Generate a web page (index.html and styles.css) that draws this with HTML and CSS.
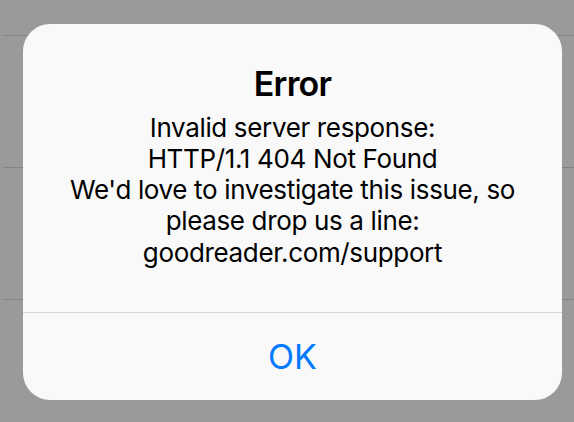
FILE: index.html
```html
<!DOCTYPE html>
<html lang="en">
<head>
<meta charset="utf-8">
<title>Error</title>
<link rel="stylesheet" href="styles.css">
</head>
<body>
<div class="list">
  <div class="row"></div>
  <div class="row"></div>
  <div class="row"></div>
</div>
<div class="alert" role="alertdialog">
  <div class="alert-content">
    <div class="alert-title">Error</div>
    <div class="alert-message">Invalid server response:<br>HTTP/1.1 404 Not Found<br>We'd love to investigate this issue, so<br>please drop us a line:<br>goodreader.com/support</div>
  </div>
  <div class="alert-actions">
    <button class="alert-button">OK</button>
  </div>
</div>
</body>
</html>
```
FILE: styles.css
```css
html, body {
  margin: 0;
  padding: 0;
  width: 574px;
  height: 422px;
  overflow: hidden;
  background: #9a9a9a;
  font-family: Inter, "Noto Sans", sans-serif;
}

.list {
  padding-top: 35px;
  padding-left: 3px;
}

.row {
  height: 131px;
  border-top: 1px solid #828282;
}

.alert {
  position: absolute;
  left: 23px;
  top: 24px;
  width: 539px;
  height: 376px;
  border-radius: 27px;
  background: #f9f9f9;
  display: flex;
  flex-direction: column;
  overflow: hidden;
}

.alert-content {
  height: 288px;
  box-sizing: border-box;
  padding: 39px 20px 0;
  text-align: center;
  color: #000;
}

.alert-title {
  font-size: 34px;
  font-weight: 600;
  line-height: 41px;
  letter-spacing: -0.8px;
}

.alert-message {
  margin-top: 7.6px;
  font-size: 26px;
  font-weight: 400;
  line-height: 31.3px;
  letter-spacing: -0.35px;
}

.alert-actions {
  flex: 1;
  border-top: 1px solid #d6d6da;
  display: flex;
}

.alert-button {
  flex: 1;
  border: 0;
  background: transparent;
  margin: 0;
  padding: 0;
  font-family: inherit;
  font-size: 34px;
  font-weight: 400;
  line-height: 41px;
  color: #007aff;
}
```
